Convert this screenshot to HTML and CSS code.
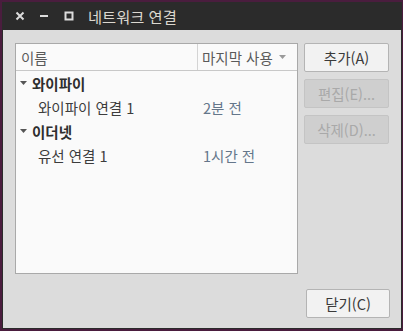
FILE: index.html
```html
<!DOCTYPE html>
<html lang="ko">
<head>
<meta charset="utf-8">
<link rel="stylesheet" href="styles.css">
</head>
<body>
<div class="window">
  <div class="titlebar">
    <span class="ctl ctl-close"><svg width="10" height="10" viewBox="0 0 10 10"><path d="M1.5 1.5 L8.5 8.5 M8.5 1.5 L1.5 8.5" stroke="#dcdcdc" stroke-width="2"/></svg></span>
    <span class="ctl ctl-min"><svg width="10" height="10" viewBox="0 0 10 10"><path d="M1 5 H9" stroke="#dcdcdc" stroke-width="2"/></svg></span>
    <span class="ctl ctl-max"><svg width="10" height="10" viewBox="0 0 10 10"><rect x="1.5" y="1.5" width="7" height="7" fill="none" stroke="#dcdcdc" stroke-width="2"/></svg></span>
    <span class="title">네트워크 연결</span>
  </div>
  <div class="content">
    <div class="main">
      <div class="list">
        <div class="list-head">
          <div class="col-name">이름</div>
          <div class="col-time">마지막 사용 <span class="sort"><svg width="7" height="4" viewBox="0 0 7 4"><path d="M0 0 H7 L3.5 4 Z" fill="#9a9a9a"/></svg></span></div>
        </div>
        <div class="row group"><span class="exp"><svg width="7" height="4" viewBox="0 0 7 4"><path d="M0 0 H7 L3.5 4 Z" fill="#555"/></svg></span>와이파이</div>
        <div class="row item"><span class="name">와이파이 연결 1</span><span class="time">2분 전</span></div>
        <div class="row group"><span class="exp"><svg width="7" height="4" viewBox="0 0 7 4"><path d="M0 0 H7 L3.5 4 Z" fill="#555"/></svg></span>이더넷</div>
        <div class="row item"><span class="name">유선 연결 1</span><span class="time">1시간 전</span></div>
      </div>
      <div class="side">
        <button class="btn">추가(A)</button>
        <button class="btn disabled">편집(E)...</button>
        <button class="btn disabled">삭제(D)...</button>
      </div>
    </div>
    <div class="footer">
      <button class="btn">닫기(C)</button>
    </div>
  </div>
</div>
</body>
</html>
```

FILE: styles.css
```css
* { box-sizing: border-box; }
html, body { margin: 0; padding: 0; }
body {
  width: 403px;
  height: 331px;
  background: #4a1d3e;
  padding: 2px 1px 0 2px;
  font-family: "Noto Sans CJK KR", "Noto Sans", sans-serif;
  font-size: 14px;
  overflow: hidden;
}
.window {
  width: 400px;
  height: 327px;
  display: flex;
  flex-direction: column;
  background: #2b2b2b;
}
.titlebar {
  height: 28px;
  display: flex;
  align-items: center;
  background: #2b2b2b;
  color: #dcd8d0;
  padding-left: 13px;
}
.ctl { display: flex; width: 10px; height: 10px; }
.ctl-min { margin-left: 14px; }
.ctl-max { margin-left: 15px; }
.title { margin-left: 14px; font-size: 15.3px; }
.content {
  flex: 1;
  margin: 0 1px 1px 1px;
  background: #dcdcdc;
  display: flex;
  flex-direction: column;
  padding: 13px 11px 10px 12px;
}
.main { display: flex; gap: 6px; }
.list {
  width: 283px;
  height: 231px;
  background: #fafafa;
  border: 1px solid #a9a9a9;
}
.list-head {
  display: flex;
  height: 27px;
  border-bottom: 1px solid #c8c8c8;
  color: #5a5a5a;
  font-size: 14.5px;
}
.col-name {
  width: 182px;
  padding-left: 5px;
  display: flex;
  align-items: center;
  border-right: 1px solid #d4d4d4;
}
.col-time {
  flex: 1;
  padding-left: 4px;
  display: flex;
  align-items: center;
}
.sort { display: flex; margin-left: 6px; }
.row {
  height: 24px;
  display: flex;
  align-items: center;
}
.group {
  padding-left: 4px;
  font-weight: bold;
  color: #2e2e2e;
  font-size: 14.5px;
}
.exp { display: flex; width: 8px; margin-right: 4px; }
.item { color: #3c3c3c; font-size: 14.5px; }
.item .name { width: 187px; padding-left: 22px; }
.item .time { color: #64768a; }
.side {
  width: 85px;
  display: flex;
  flex-direction: column;
  gap: 7px;
}
.btn {
  height: 29px;
  width: 85px;
  border: 1px solid #b4b4b4;
  border-radius: 2px;
  background: #f2f2f2;
  color: #3a3a3a;
  font-family: "Noto Sans CJK KR", "Noto Sans", sans-serif;
  font-size: 14.5px;
  padding: 0;
}
.btn.disabled {
  background: #cfcfcf;
  border-color: #c4c4c4;
  color: #a9a9a9;
}
.footer {
  margin-top: auto;
  display: flex;
  justify-content: flex-end;
}
.footer .btn { width: 84px; }
```
